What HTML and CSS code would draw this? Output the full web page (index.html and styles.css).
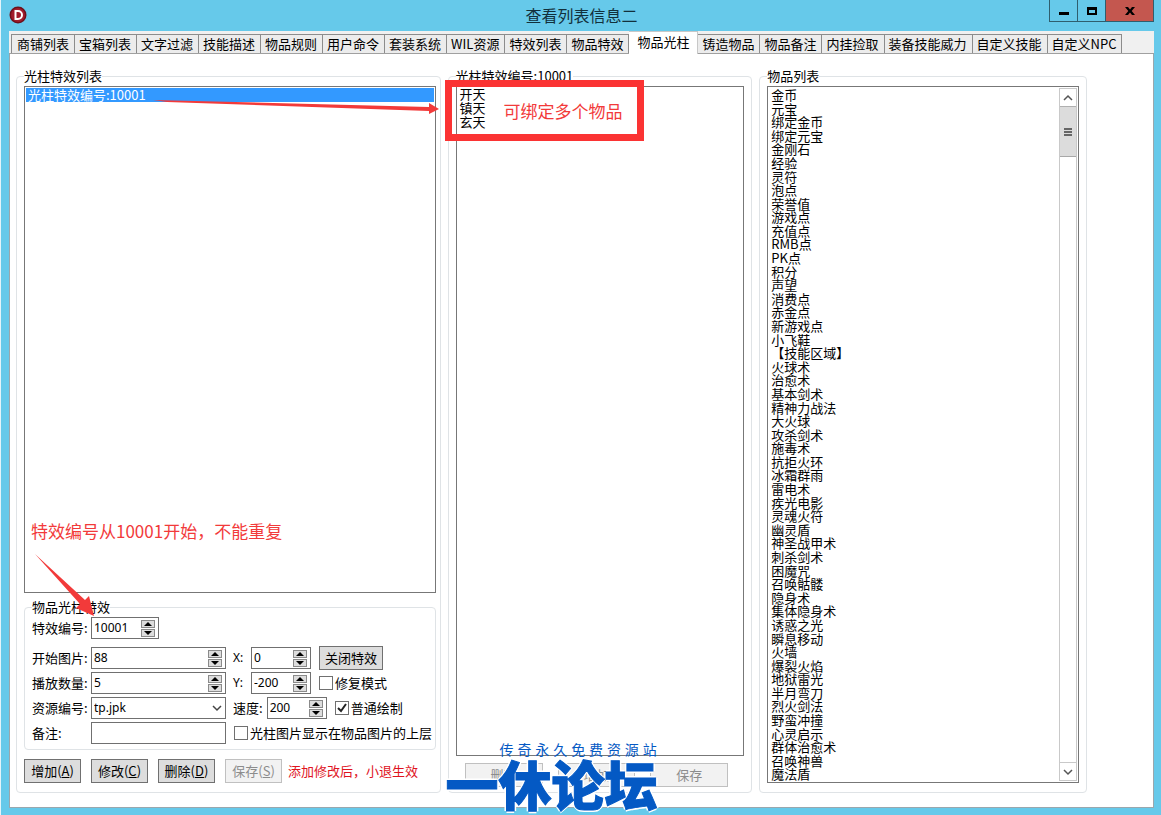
FILE: index.html
```
<!DOCTYPE html>
<html lang="zh-CN">
<head>
    <meta charset="UTF-8">
    <meta name="viewport" content="width=device-width, initial-scale=1.0">
    <title>查看列表信息二</title>
    <link rel="stylesheet" href="styles.css">
</head>
<body>

<div class="window">
    <header class="titlebar">
        <svg class="app-icon" viewBox="0 0 18 18" aria-hidden="true">
            <circle cx="9" cy="9" r="8.5" fill="#6d0f1b"/>
            <circle cx="9" cy="9" r="7" fill="#a01c2c"/>
            <path d="M6.500 5h2.500a4 4 0 0 1 0 8H6.500z" fill="none" stroke="#fff" stroke-width="2"/>
        </svg>
        <h1>查看列表信息二</h1>
        <div class="win-buttons">
            <button type="button" aria-label="最小化"><svg viewBox="0 0 12 12"><path d="M1 7h10v3H1z"/></svg></button>
            <button type="button" aria-label="最大化"><svg viewBox="0 0 12 12"><path d="M1 2h10v8H1zM3 5v3h6V5z" fill-rule="evenodd"/></svg></button>
            <button type="button" class="close" aria-label="关闭"><svg viewBox="0 0 12 12"><path d="M1 2h3l2 2.500 2-2.500h3L7.700 6 11 10H8L6 7.500 4 10H1l3.300-4z"/></svg></button>
        </div>
    </header>

    <nav class="tabs">
        <button type="button">商铺列表</button>
        <button type="button">宝箱列表</button>
        <button type="button">文字过滤</button>
        <button type="button">技能描述</button>
        <button type="button">物品规则</button>
        <button type="button">用户命令</button>
        <button type="button">套装系统</button>
        <button type="button">WIL资源</button>
        <button type="button">特效列表</button>
        <button type="button">物品特效</button>
        <button type="button" class="active">物品光柱</button>
        <button type="button">铸造物品</button>
        <button type="button">物品备注</button>
        <button type="button">内挂捡取</button>
        <button type="button">装备技能威力</button>
        <button type="button">自定义技能</button>
        <button type="button">自定义NPC</button>
    </nav>

    <main class="page">
        <fieldset class="group left">
            <legend>光柱特效列表</legend>
            <ul class="listbox effects" role="listbox" aria-label="光柱特效列表">
                <li role="option" aria-selected="true" class="selected">光柱特效编号:10001</li>
            </ul>

            <fieldset class="group form">
                <legend>物品光柱特效</legend>
                <div class="row first">
                    <label class="name" for="effectId">特效编号:</label>
                    <span class="spin id"><input id="effectId" type="text" value="10001"><span class="arrows"><button type="button" aria-label="增"></button><button type="button" class="down" aria-label="减"></button></span></span>
                </div>
                <div class="row">
                    <label class="name" for="startImg">开始图片:</label>
                    <span class="spin wide"><input id="startImg" type="text" value="88"><span class="arrows"><button type="button" aria-label="增"></button><button type="button" class="down" aria-label="减"></button></span></span>
                    <label class="axis" for="posX">X:</label>
                    <span class="spin"><input id="posX" type="text" value="0"><span class="arrows"><button type="button" aria-label="增"></button><button type="button" class="down" aria-label="减"></button></span></span>
                    <button type="button" class="btn">关闭特效</button>
                </div>
                <div class="row">
                    <label class="name" for="playCount">播放数量:</label>
                    <span class="spin wide"><input id="playCount" type="text" value="5"><span class="arrows"><button type="button" aria-label="增"></button><button type="button" class="down" aria-label="减"></button></span></span>
                    <label class="axis" for="posY">Y:</label>
                    <span class="spin"><input id="posY" type="text" value="-200"><span class="arrows"><button type="button" aria-label="增"></button><button type="button" class="down" aria-label="减"></button></span></span>
                    <label class="check"><input type="checkbox">修复模式</label>
                </div>
                <div class="row">
                    <label class="name" for="resId">资源编号:</label>
                    <select id="resId" class="wide"><option>tp.jpk</option></select>
                    <label class="speed" for="speed">速度:</label>
                    <span class="spin"><input id="speed" type="text" value="200"><span class="arrows"><button type="button" aria-label="增"></button><button type="button" class="down" aria-label="减"></button></span></span>
                    <label class="check"><input type="checkbox" checked>普通绘制</label>
                </div>
                <div class="row">
                    <label class="name" for="remark">备注:</label>
                    <input id="remark" class="text wide" type="text">
                    <label class="check"><input type="checkbox">光柱图片显示在物品图片的上层</label>
                </div>
            </fieldset>

            <div class="actions">
                <button type="button" class="btn">增加(<u>A</u>)</button>
                <button type="button" class="btn">修改(<u>C</u>)</button>
                <button type="button" class="btn">删除(<u>D</u>)</button>
                <button type="button" class="btn" disabled>保存(<u>S</u>)</button>
                <span class="hint">添加修改后，小退生效</span>
            </div>

            <div class="note note-id">特效编号从10001开始，不能重复</div>
            <svg class="arrow-bind" viewBox="0 0 286 14" aria-hidden="true">
                <path d="M0 0L276 7V3l10 6-10 5v-3L14 2z" fill="#f23a3a"/>
            </svg>
            <svg class="arrow-id" viewBox="0 0 62 64" aria-hidden="true">
                <path d="M0 0L50 46l4-4 5 20-18-8 4-4z" fill="#f23a3a"/>
            </svg>
        </fieldset>

        <fieldset class="group">
            <legend>光柱特效编号:10001</legend>
            <ul class="listbox items" role="listbox" aria-label="光柱特效编号:10001">
                <li role="option">开天</li>
                <li role="option">镇天</li>
                <li role="option">玄天</li>
            </ul>
            <div class="actions middle">
                <button type="button" class="btn" disabled>删除</button>
                <button type="button" class="btn" disabled>增加</button>
                <button type="button" class="btn" disabled>保存</button>
            </div>

            <div class="note note-bind">可绑定多个物品</div>
            <div class="watermark">
                <p>传 奇 永 久 免 费 资 源 站</p>
                <strong>一休论坛</strong>
            </div>
        </fieldset>

        <fieldset class="group">
            <legend>物品列表</legend>
            <div class="listbox scroll">
                <ul role="listbox" aria-label="物品列表">
                    <li role="option">金币</li>
                    <li role="option">元宝</li>
                    <li role="option">绑定金币</li>
                    <li role="option">绑定元宝</li>
                    <li role="option">金刚石</li>
                    <li role="option">经验</li>
                    <li role="option">灵符</li>
                    <li role="option">泡点</li>
                    <li role="option">荣誉值</li>
                    <li role="option">游戏点</li>
                    <li role="option">充值点</li>
                    <li role="option">RMB点</li>
                    <li role="option">PK点</li>
                    <li role="option">积分</li>
                    <li role="option">声望</li>
                    <li role="option">消费点</li>
                    <li role="option">赤金点</li>
                    <li role="option">新游戏点</li>
                    <li role="option">小飞鞋</li>
                    <li role="option">【技能区域】</li>
                    <li role="option">火球术</li>
                    <li role="option">治愈术</li>
                    <li role="option">基本剑术</li>
                    <li role="option">精神力战法</li>
                    <li role="option">大火球</li>
                    <li role="option">攻杀剑术</li>
                    <li role="option">施毒术</li>
                    <li role="option">抗拒火环</li>
                    <li role="option">冰霜群雨</li>
                    <li role="option">雷电术</li>
                    <li role="option">疾光电影</li>
                    <li role="option">灵魂火符</li>
                    <li role="option">幽灵盾</li>
                    <li role="option">神圣战甲术</li>
                    <li role="option">刺杀剑术</li>
                    <li role="option">困魔咒</li>
                    <li role="option">召唤骷髅</li>
                    <li role="option">隐身术</li>
                    <li role="option">集体隐身术</li>
                    <li role="option">诱惑之光</li>
                    <li role="option">瞬息移动</li>
                    <li role="option">火墙</li>
                    <li role="option">爆裂火焰</li>
                    <li role="option">地狱雷光</li>
                    <li role="option">半月弯刀</li>
                    <li role="option">烈火剑法</li>
                    <li role="option">野蛮冲撞</li>
                    <li role="option">心灵启示</li>
                    <li role="option">群体治愈术</li>
                    <li role="option">召唤神兽</li>
                    <li role="option">魔法盾</li>
                </ul>
                <div class="scrollbar">
                    <button type="button" aria-label="向上"><svg viewBox="0 0 10 10"><path d="M1 7l4-4 4 4"/></svg></button>
                    <div class="track"><div class="thumb"></div></div>
                    <button type="button" aria-label="向下"><svg viewBox="0 0 10 10"><path d="M1 3l4 4 4-4"/></svg></button>
                </div>
            </div>
        </fieldset>
    </main>
</div>

</body>
</html>
```
FILE: styles.css
```
* {
    box-sizing: border-box;
}
body {
    margin: 0;
    font-family: "Noto Sans CJK SC", sans-serif;
    font-size: 13px;
    line-height: 16px;
    color: #000;
}
button, input, select {
    font: inherit;
    color: inherit;
    margin: 0;
    padding: 0;
}
ul {
    list-style: none;
    margin: 0;
    padding: 0;
}
.window {
    display: flex;
    flex-direction: column;
    min-height: 100vh;
    padding: 0 7px 7px 8px;
    background-color: #66c9ea;
    border-left: 1px solid #e4f4fa;
}

/* Title bar */
.titlebar {
    display: grid;
    grid-template-columns: 105px 1fr 105px;
    height: 31px;
}
.app-icon {
    width: 18px;
    height: 18px;
    margin-top: 6px;
}
.titlebar h1 {
    margin: 0;
    font-size: 16px;
    font-weight: normal;
    line-height: 30px;
    text-align: center;
    color: #12303c;
}
.win-buttons {
    display: flex;
    height: 22px;
    border: 1px solid #2f5e6e;
    border-top: none;
}
.win-buttons button {
    flex: 28;
    display: flex;
    align-items: center;
    justify-content: center;
    border: none;
    border-right: 1px solid #2f5e6e;
    background: none;
}
.win-buttons .close {
    flex: 48;
    border-right: none;
    background-color: #c4574f;
}
.win-buttons svg {
    width: 12px;
    height: 12px;
}

/* Tabs */
.tabs {
    display: flex;
    align-items: flex-end;
    height: 23px;
    padding-left: 2px;
    background-color: #f0f0f0;
    border-bottom: 1px solid #a0a0a0;
}
.tabs button {
    height: 19px;
    padding: 0 5px 0 4px;
    line-height: 18px;
    white-space: nowrap;
    background-color: #ececec;
    border: 1px solid #8c8c8c;
    border-left: none;
    border-bottom: none;
}
.tabs button:first-child {
    padding-left: 5px;
    border-left: 1px solid #8c8c8c;
}
.tabs .active {
    height: 23px;
    margin-bottom: -1px;
    padding: 0 8px 3px;
    background-color: #fff;
    border-color: #c8c8c8;
}

/* Page */
.page {
    flex: 1;
    display: grid;
    grid-template-columns: 425fr 305fr 328fr;
    gap: 7px;
    padding: 14px 66px 14px 6px;
    background-color: #fff;
    border: 1px solid #9aa7ad;
    border-top: none;
}
.group {
    position: relative;
    display: flex;
    flex-direction: column;
    min-width: 0;
    margin: 0;
    padding: 2px 7px 9px;
    border: 1px solid #dfe3e6;
    border-radius: 4px;
}
.group.left {
    padding-right: 4px;
}
.group legend {
    padding: 0;
    height: 16px;
}
.listbox {
    flex: 1;
    padding: 1px;
    background-color: #fff;
    border: 1px solid #777;
}
.listbox li {
    padding: 0 2px;
    line-height: 14px;
    white-space: nowrap;
}
.listbox .selected {
    background-color: #3399ff;
    color: #fff;
}

/* Effect form */
.group.form {
    margin-top: 6px;
    padding: 2px 0 5px 7px;
}
.row {
    display: flex;
    align-items: center;
    height: 22px;
    margin-bottom: 3px;
}
.row.first {
    margin-bottom: 8px;
}
.row:last-child {
    margin-bottom: 0;
}
.name {
    flex: none;
    width: 59px;
    white-space: nowrap;
}
.spin, .text, select {
    flex: none;
    height: 22px;
    background-color: #fff;
    border: 1px solid #707070;
    border-radius: 0;
    font-family: "Noto Sans", "Noto Sans CJK SC", sans-serif;
    font-size: 12px;
}
.spin {
    display: flex;
    align-items: center;
    width: 60px;
    padding: 0 3px 0 2px;
}
.spin.id {
    width: 68px;
}
.spin.wide, .text.wide, select.wide {
    width: 135px;
}
.spin input {
    flex: 1;
    min-width: 0;
    border: none;
    background: none;
    outline: none;
}
.arrows {
    display: flex;
    flex-direction: column;
    gap: 1px;
}
.arrows button {
    display: flex;
    align-items: center;
    justify-content: center;
    width: 14px;
    height: 8px;
    background-color: #ddd;
    border: 1px solid #8a8a8a;
}
.arrows button::before {
    content: "";
    border: 4px solid transparent;
    border-top: none;
    border-bottom: 4px solid #000;
}
.arrows .down::before {
    border-top: 4px solid #000;
    border-bottom: none;
}
select {
    appearance: none;
    padding: 0 2px;
    background: #fff url("data:image/svg+xml,%3Csvg xmlns='http://www.w3.org/2000/svg' width='10' height='8'%3E%3Cpath d='M1 2l4 4 4-4' fill='none' stroke='%23444' stroke-width='1.500'/%3E%3C/svg%3E") no-repeat right 3px center;
}
.axis {
    width: 25px;
    padding-left: 7px;
    font-family: "Noto Sans", sans-serif;
    font-size: 12px;
}
.speed {
    padding: 0 4px 0 7px;
}
.check {
    display: flex;
    align-items: center;
    gap: 2px;
    margin-left: 8px;
    white-space: nowrap;
}
.check input {
    appearance: none;
    width: 14px;
    height: 14px;
    background-color: #fff;
    border: 1px solid #707070;
}
.check input:checked {
    background: #fff url("data:image/svg+xml,%3Csvg xmlns='http://www.w3.org/2000/svg' width='12' height='12'%3E%3Cpath d='M2 6l3 3 5-7' fill='none' stroke='%23222' stroke-width='2'/%3E%3C/svg%3E") no-repeat center;
}
.btn {
    height: 24px;
    padding: 0 5px;
    line-height: 20px;
    white-space: nowrap;
    background-color: #ddd;
    border: 1px solid #707070;
}
.btn:disabled {
    color: #8c8c8c;
    background-color: #f2f2f2;
    border-color: #c0c0c0;
}
.row .btn {
    margin-left: 8px;
}
.actions {
    display: flex;
    align-items: center;
    gap: 10px;
    margin-top: 9px;
}
.actions .btn {
    width: 57px;
    padding: 0;
}
.actions.middle {
    gap: 15px;
    margin-top: 7px;
    margin-bottom: -4px;
    padding: 0 16px 0 9px;
}
.actions.middle .btn {
    flex: 1;
}
.hint {
    margin-left: -4px;
    color: #e0141e;
    white-space: nowrap;
}

/* Item lists */
.items {
    padding-top: 0;
}
.scroll {
    display: flex;
}
.scroll ul {
    flex: 1;
    display: grid;
    grid-auto-rows: 1fr;
}
.scroll li {
    line-height: 13px;
}
.scrollbar {
    display: flex;
    flex-direction: column;
    width: 18px;
    border: 1px solid #c9c9c9;
}
.scrollbar button {
    height: 17px;
    padding: 0;
    background-color: #fff;
    border: none;
}
.scrollbar svg {
    display: block;
    width: 10px;
    height: 10px;
    margin: 0 auto;
    fill: none;
    stroke: #555;
    stroke-width: 1.5;
}
.track {
    flex: 1;
    border-top: 1px solid #b0b0b0;
    border-bottom: 1px solid #c9c9c9;
}
.thumb {
    display: flex;
    align-items: center;
    justify-content: center;
    height: 50px;
    background-color: #dcdcdc;
    border-bottom: 1px solid #a8a8a8;
}
.thumb::before {
    content: "";
    width: 8px;
    height: 8px;
    background: repeating-linear-gradient(#666 0 2px, #dcdcdc 2px 3px);
}

/* Notes drawn over the lists */
.note {
    position: absolute;
    font-size: 17px;
    line-height: 24px;
    color: #f23a3a;
    white-space: nowrap;
}
.note-id {
    left: 14px;
    bottom: 249px;
}
.note-bind {
    left: -4px;
    top: -4px;
    width: 199px;
    height: 61px;
    padding: 12px 0 0 52px;
    border: 7px solid #fb3333;
}
.arrow-bind {
    position: absolute;
    z-index: 1;
    left: 136px;
    top: 16px;
    width: 286px;
    height: 14px;
}
.arrow-id {
    position: absolute;
    left: 18px;
    bottom: 174px;
    width: 62px;
    height: 64px;
}
.watermark {
    position: absolute;
    left: -3px;
    bottom: -16px;
    color: #0459c4;
    white-space: nowrap;
}
.watermark p {
    margin: 0 0 0 54px;
    font-family: "Liberation Sans", "Noto Sans CJK SC", sans-serif;
    font-size: 14px;
}
.watermark strong {
    display: block;
    font-size: 53px;
    font-weight: 900;
    line-height: 50px;
    -webkit-text-stroke: 1px #0459c4;
    text-shadow: 2px 0 0 #fff, -2px 0 0 #fff, 0 2px 0 #fff, 0 -2px 0 #fff;
}
```
